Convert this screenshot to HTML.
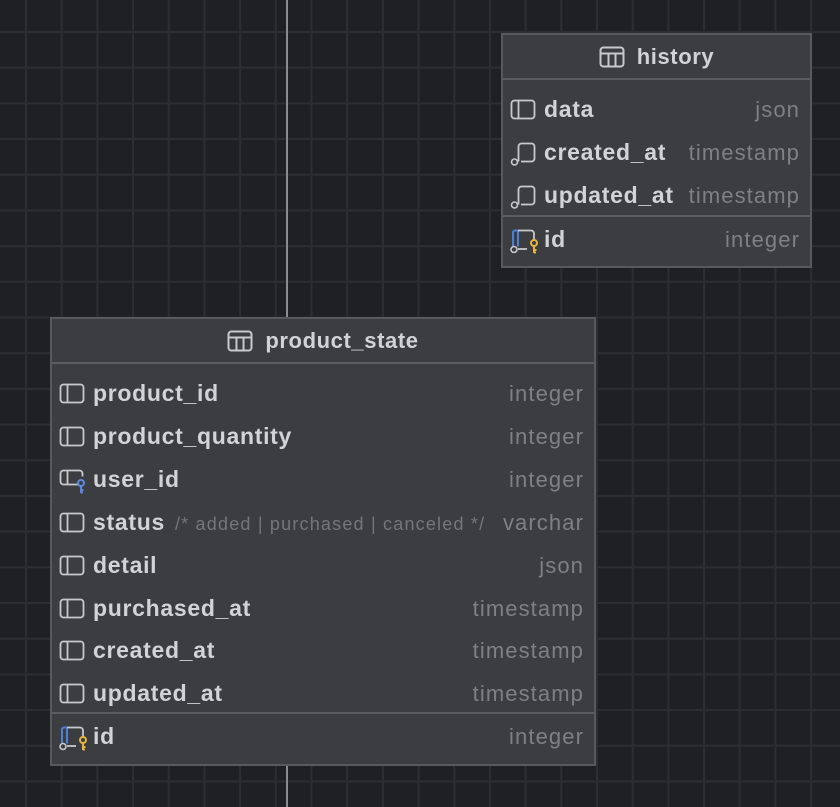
<!DOCTYPE html>
<html><head><style>
body{margin:0;width:840px;height:807px;overflow:hidden;background-color:#1f2023;
background-image:linear-gradient(to right,#2d2e32 2px,transparent 2px),linear-gradient(to bottom,#2d2e32 2px,transparent 2px);
background-size:35.7px 35.7px;background-position:25px 31px;font-family:"Liberation Sans",sans-serif;position:relative}
.vl{position:absolute;left:286px;width:2px;background:#8a8b8e}
.t{position:absolute;background:#3b3d40;border:2px solid #57595c;box-sizing:border-box}
.hd{position:absolute;left:0;right:0;top:0;height:43px;background:#3c3d40;border-bottom:2px solid #5b5d60;color:#d2d3d6;font-weight:bold;font-size:22px;letter-spacing:0.6px;display:flex;align-items:center;justify-content:center;gap:12px}
.r{position:absolute;left:0;right:0;height:43px;display:flex;align-items:center}
.r svg{position:absolute;left:7px;top:11px}
.n{position:absolute;left:41px;color:#d2d3d6;font-weight:bold;font-size:23px;letter-spacing:0.7px;white-space:nowrap}
.ty{position:absolute;right:10px;color:#7e8084;font-size:22px;letter-spacing:1.1px}
.cm{color:#74767a;font-size:18px;font-weight:normal;margin-left:10px;letter-spacing:1.2px}
.dv{position:absolute;left:0;right:0;height:2px;background:#5b5d60}
</style></head><body>
<div class="vl" style="top:0;height:318px"></div>
<div class="vl" style="top:765px;height:42px"></div>

<div class="t" style="left:501px;top:33px;width:311px;height:235px">
 <div class="hd"><svg width="26" height="22" viewBox="0 0 26 22"><rect x="1.5" y="1.5" width="23" height="19" rx="3" fill="none" stroke="#c8c9cc" stroke-width="2"/><line x1="1.5" y1="7.5" x2="24.5" y2="7.5" stroke="#c8c9cc" stroke-width="2"/><line x1="9.5" y1="7.5" x2="9.5" y2="20" stroke="#c8c9cc" stroke-width="2"/><line x1="16.5" y1="7.5" x2="16.5" y2="20" stroke="#c8c9cc" stroke-width="2"/></svg>history</div>
 <div class="r" style="top:53px"><svg width="26" height="22"><rect x="1.5" y="1.5" width="23" height="18" rx="3" fill="none" stroke="#c8c9cc" stroke-width="1.8"/><line x1="8.5" y1="1.5" x2="8.5" y2="19.5" stroke="#c8c9cc" stroke-width="1.8"/></svg><span class="n">data</span><span class="ty">json</span></div>
 <div class="r" style="top:96px"><svg width="26" height="24"><path d="M8.5 19.5V4.5a3 3 0 0 1 3-3h10a3 3 0 0 1 3 3v12a3 3 0 0 1-3 3H11" fill="none" stroke="#c8c9cc" stroke-width="1.8"/><circle cx="4.5" cy="20" r="3" fill="none" stroke="#c8c9cc" stroke-width="1.6"/></svg><span class="n">created_at</span><span class="ty">timestamp</span></div>
 <div class="r" style="top:139px"><svg width="26" height="24"><path d="M8.5 19.5V4.5a3 3 0 0 1 3-3h10a3 3 0 0 1 3 3v12a3 3 0 0 1-3 3H11" fill="none" stroke="#c8c9cc" stroke-width="1.8"/><circle cx="4.5" cy="20" r="3" fill="none" stroke="#c8c9cc" stroke-width="1.6"/></svg><span class="n">updated_at</span><span class="ty">timestamp</span></div>
 <div class="dv" style="top:180px"></div>
 <div class="r" style="top:183px"><svg width="30" height="26"><path d="M3 17V3.5a2 2 0 0 1 2-2h3v16" fill="none" stroke="#4e7fd8" stroke-width="2"/><path d="M8 1.5h13a3 3 0 0 1 3 3v6" fill="none" stroke="#c8c9cc" stroke-width="1.8"/><path d="M8 20h9" stroke="#c8c9cc" stroke-width="1.8"/><circle cx="4" cy="20.5" r="3" fill="none" stroke="#c8c9cc" stroke-width="1.6"/><circle cx="24" cy="14" r="3" fill="none" stroke="#e6b43f" stroke-width="2"/><path d="M24 17v7M24 21h2.5M24 23.5h2" stroke="#e6b43f" stroke-width="2"/></svg><span class="n">id</span><span class="ty">integer</span></div>
</div>

<div class="t" style="left:50px;top:317px;width:546px;height:449px">
 <div class="hd"><svg width="26" height="22" viewBox="0 0 26 22"><rect x="1.5" y="1.5" width="23" height="19" rx="3" fill="none" stroke="#c8c9cc" stroke-width="2"/><line x1="1.5" y1="7.5" x2="24.5" y2="7.5" stroke="#c8c9cc" stroke-width="2"/><line x1="9.5" y1="7.5" x2="9.5" y2="20" stroke="#c8c9cc" stroke-width="2"/><line x1="16.5" y1="7.5" x2="16.5" y2="20" stroke="#c8c9cc" stroke-width="2"/></svg>product_state</div>
 <div class="r" style="top:53px"><svg width="26" height="22"><rect x="1.5" y="1.5" width="23" height="18" rx="3" fill="none" stroke="#c8c9cc" stroke-width="1.8"/><line x1="8.5" y1="1.5" x2="8.5" y2="19.5" stroke="#c8c9cc" stroke-width="1.8"/></svg><span class="n">product_id</span><span class="ty">integer</span></div>
 <div class="r" style="top:96px"><svg width="26" height="22"><rect x="1.5" y="1.5" width="23" height="18" rx="3" fill="none" stroke="#c8c9cc" stroke-width="1.8"/><line x1="8.5" y1="1.5" x2="8.5" y2="19.5" stroke="#c8c9cc" stroke-width="1.8"/></svg><span class="n">product_quantity</span><span class="ty">integer</span></div>
 <div class="r" style="top:139px"><svg width="30" height="26"><path d="M20 15.5H4.5a3 3 0 0 1-3-3v-8a3 3 0 0 1 3-3h16a3 3 0 0 1 3 3v3" fill="none" stroke="#c8c9cc" stroke-width="1.8"/><line x1="8.5" y1="1.5" x2="8.5" y2="15.5" stroke="#c8c9cc" stroke-width="1.8"/><circle cx="22" cy="14" r="3" fill="none" stroke="#5b8ae0" stroke-width="2"/><path d="M22 17v7M22 21h2.5M22 23.5h2" stroke="#5b8ae0" stroke-width="2"/></svg><span class="n">user_id</span><span class="ty">integer</span></div>
 <div class="r" style="top:182px"><svg width="26" height="22"><rect x="1.5" y="1.5" width="23" height="18" rx="3" fill="none" stroke="#c8c9cc" stroke-width="1.8"/><line x1="8.5" y1="1.5" x2="8.5" y2="19.5" stroke="#c8c9cc" stroke-width="1.8"/></svg><span class="n">status<span class="cm">/* added | purchased | canceled */</span></span><span class="ty">varchar</span></div>
 <div class="r" style="top:225px"><svg width="26" height="22"><rect x="1.5" y="1.5" width="23" height="18" rx="3" fill="none" stroke="#c8c9cc" stroke-width="1.8"/><line x1="8.5" y1="1.5" x2="8.5" y2="19.5" stroke="#c8c9cc" stroke-width="1.8"/></svg><span class="n">detail</span><span class="ty">json</span></div>
 <div class="r" style="top:268px"><svg width="26" height="22"><rect x="1.5" y="1.5" width="23" height="18" rx="3" fill="none" stroke="#c8c9cc" stroke-width="1.8"/><line x1="8.5" y1="1.5" x2="8.5" y2="19.5" stroke="#c8c9cc" stroke-width="1.8"/></svg><span class="n">purchased_at</span><span class="ty">timestamp</span></div>
 <div class="r" style="top:310px"><svg width="26" height="22"><rect x="1.5" y="1.5" width="23" height="18" rx="3" fill="none" stroke="#c8c9cc" stroke-width="1.8"/><line x1="8.5" y1="1.5" x2="8.5" y2="19.5" stroke="#c8c9cc" stroke-width="1.8"/></svg><span class="n">created_at</span><span class="ty">timestamp</span></div>
 <div class="r" style="top:353px"><svg width="26" height="22"><rect x="1.5" y="1.5" width="23" height="18" rx="3" fill="none" stroke="#c8c9cc" stroke-width="1.8"/><line x1="8.5" y1="1.5" x2="8.5" y2="19.5" stroke="#c8c9cc" stroke-width="1.8"/></svg><span class="n">updated_at</span><span class="ty">timestamp</span></div>
 <div class="dv" style="top:393px"></div>
 <div class="r" style="top:396px"><svg width="30" height="26"><path d="M3 17V3.5a2 2 0 0 1 2-2h3v16" fill="none" stroke="#4e7fd8" stroke-width="2"/><path d="M8 1.5h13a3 3 0 0 1 3 3v6" fill="none" stroke="#c8c9cc" stroke-width="1.8"/><path d="M8 20h9" stroke="#c8c9cc" stroke-width="1.8"/><circle cx="4" cy="20.5" r="3" fill="none" stroke="#c8c9cc" stroke-width="1.6"/><circle cx="24" cy="14" r="3" fill="none" stroke="#e6b43f" stroke-width="2"/><path d="M24 17v7M24 21h2.5M24 23.5h2" stroke="#e6b43f" stroke-width="2"/></svg><span class="n">id</span><span class="ty">integer</span></div>
</div>
</body></html>
